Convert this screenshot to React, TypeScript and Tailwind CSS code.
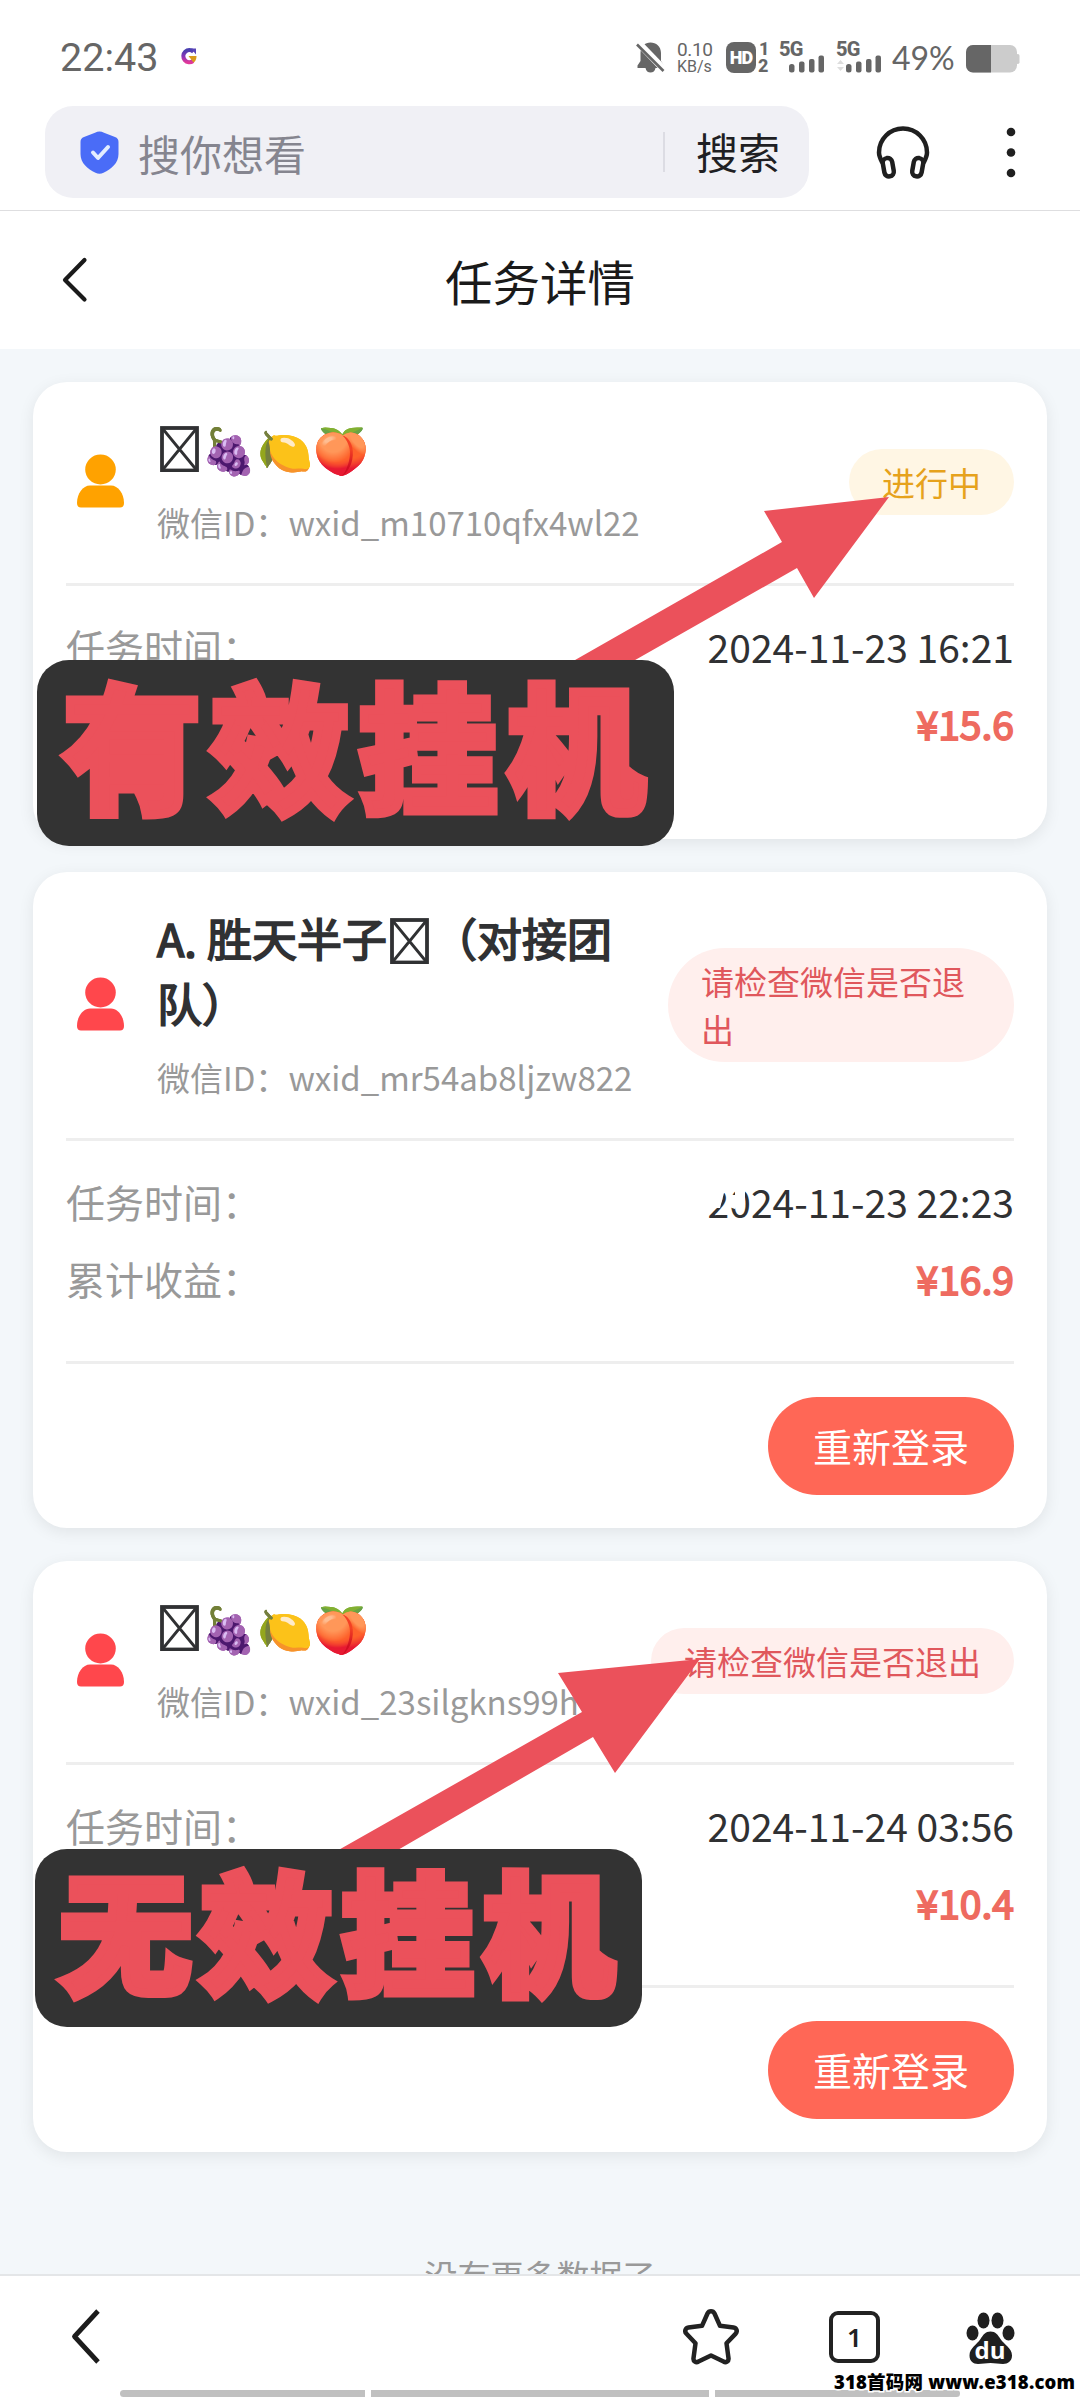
import clsx from 'clsx'

type Task = {
  name: 'fruit' | 'team'
  wxid: string
  status: string
  active: boolean
  time: string
  income: string
}

const tasks: Task[] = [
  {
    name: 'fruit',
    wxid: 'wxid_m10710qfx4wl22',
    status: '进行中',
    active: true,
    time: '2024-11-23 16:21',
    income: '¥15.6',
  },
  {
    name: 'team',
    wxid: 'wxid_mr54ab8ljzw822',
    status: '请检查微信是否退出',
    active: false,
    time: '2024-11-23 22:23',
    income: '¥16.9',
  },
  {
    name: 'fruit',
    wxid: 'wxid_23silgkns99h',
    status: '请检查微信是否退出',
    active: false,
    time: '2024-11-24 03:56',
    income: '¥10.4',
  },
]

function Signal({ arrows }: { arrows?: boolean }) {
  return (
    <div className="relative h-[31px] w-[46px]">
      <span className="absolute left-0 top-0 font-['Roboto'] text-[20px] font-extrabold leading-[15px] tracking-[-0.8px]">
        5G
      </span>
      <svg className="absolute inset-0" width="46" height="31" viewBox="0 0 46 31" fill="#666">
        <rect x="10" y="22" width="5.5" height="8.500" rx="2.500" />
        <rect x="20" y="19.500" width="5.5" height="11" rx="2" />
        <rect x="30" y="17" width="5.5" height="13.500" rx="2" />
        <rect x="39.500" y="13.500" width="5.5" height="17" rx="2" />
        {arrows && <path d="M1 22l3.500-4 3.500 4zM1 25l3.500 4 3.500-4z" fill="#ddd" />}
      </svg>
    </div>
  )
}

function StatusBar() {
  return (
    <div className="flex h-[106px] items-start pl-[60px] pt-[42px] text-[#666]">
      <span className="w-[120px] font-['Roboto'] text-[39.500px] leading-[32px]">22:43</span>
      <svg className="mt-[6px]" width="18" height="18" viewBox="0 0 18 18" fill="none">
        <defs>
          <linearGradient id="g" x1="0" y1="0" x2="0" y2="1">
            <stop offset="0" stopColor="#4a3fb0" />
            <stop offset="0.55" stopColor="#8a34b8" />
            <stop offset="1" stopColor="#e0389a" />
          </linearGradient>
        </defs>
        <path d="M13.500 3.800A6 6 0 1 0 13 13" stroke="url(#g)" strokeWidth="4.200" />
        <path d="M11 0.500h5v6z" fill="#5a45b8" />
        <path d="M8.500 8h8c0 3-1 5.500-3 6.500z" fill="#d99a1c" />
      </svg>

      <svg className="ml-[438px]" width="29" height="31" viewBox="0 0 29 31">
        <path
          d="M14.500 0.500C20 0.500 25 4.500 25 11v8l3 4.500v2.500h-8.500c-.5 3-2.500 4.500-5 4.500s-4.500-1.500-5-4.500H1.500v-2.500l3-4.500v-8c0-6.500 4.500-10.500 10-10.500z"
          fill="#666"
        />
        <path d="M1.500 0L28.500 28" stroke="#fff" strokeWidth="7" />
        <path d="M1 2.500L27.500 29" stroke="#666" strokeWidth="2.600" />
      </svg>
      <div className="ml-[12px] flex w-[49px] flex-col font-['Roboto']">
        <span className="text-[19px] leading-[15px] tracking-[-0.4px]">0.10</span>
        <span className="mt-[3px] text-[16px] leading-[13px]">KB/s</span>
      </div>
      <div className="flex h-[31px] w-[30px] items-center justify-center rounded-[8px] bg-[#666] font-['Roboto'] text-[18px] font-black tracking-[-1px] text-white">
        HD
      </div>
      <div className="ml-[2px] flex w-[21px] flex-col font-['Roboto'] text-[18px] font-extrabold leading-[14px]">
        <span className="pl-[1px]">1</span>
        <span className="mt-[3px]">2</span>
      </div>
      <Signal />
      <div className="w-[11px]" />
      <Signal arrows />
      <span className="ml-[10px] mt-px w-[74px] font-['Lato'] text-[32px] leading-[30px]">49%</span>
      <svg className="mt-[3px]" width="54" height="28" viewBox="0 0 54 28">
        <rect x="0" y="0" width="51" height="27.500" rx="7" fill="#ccc" />
        <rect x="50" y="9" width="3.500" height="10" rx="1.700" fill="#ccc" />
        <path d="M7 0h18v27.500H7a7 7 0 0 1-7-7V7a7 7 0 0 1 7-7z" fill="#666" />
      </svg>
    </div>
  )
}

function SearchBar() {
  return (
    <div className="flex h-[105px] items-start border-b border-[#dedee0] pl-[45px]">
      <div className="flex h-[92px] w-[764px] items-center rounded-[28px] bg-[#f0f0f5] pl-[35px]">
        <svg className="mt-px" width="39" height="43" viewBox="0 0 39 43">
          <path
            d="M19.500 0.500c1.500 0 3 .5 4.500 1.200l11 4.300c2.500 1 3.500 2.500 3.500 5V23c0 9-7 15-15 18.800-2.500 1.200-5.500 1.200-8 0C7.500 38 .5 32 .5 23V11c0-2.500 1-4 3.500-5l11-4.300c1.500-.7 3-1.200 4.500-1.200z"
            fill="#4a6cf7"
          />
          <path
            d="M13 21.500l5 5.500 10-11"
            fill="none"
            stroke="#e3edff"
            strokeWidth="4"
            strokeLinecap="round"
            strokeLinejoin="round"
          />
        </svg>
        <span className="ml-[19px] mt-px text-[42px] leading-[60px] text-[#85858f]">
          搜你想看
        </span>
        <span className="ml-auto h-[40px] w-[2px] bg-[#dcdce3]" />
        <span className="-mt-[2px] ml-[31px] mr-[29px] text-[42px] leading-[60px] text-[#1f1f23]">
          搜索
        </span>
      </div>
      <svg className="ml-[67px] mt-[20px]" width="54" height="54" viewBox="0 0 54 54" fill="none">
        <g stroke="#1f1f1f" strokeWidth="4.500" strokeLinecap="round" strokeLinejoin="round">
          <path d="M6 36C3 30 3 28 3 26.500a24 24 0 0 1 48 0C51 28 51 30 48 36" />
          <rect x="7.500" y="32" width="9.500" height="18.500" rx="4.700" transform="rotate(-10 12 41)" />
          <rect x="37" y="32" width="9.500" height="18.500" rx="4.700" transform="rotate(10 42 41)" />
        </g>
      </svg>
      <svg className="ml-[76px] mt-[20px]" width="10" height="54" viewBox="0 0 10 54" fill="#1f1f1f">
        <circle cx="5" cy="6" r="4.300" />
        <circle cx="5" cy="26.500" r="4.300" />
        <circle cx="5" cy="47" r="4.300" />
      </svg>
    </div>
  )
}

function Person({ active }: { active: boolean }) {
  return (
    <svg
      className={clsx('-mt-[2px] mx-[10px] shrink-0', active ? 'fill-[#ffa200]' : 'fill-[#ff474c]')}
      width="49"
      height="54"
      viewBox="0 0 49 54"
    >
      <ellipse cx="24.500" cy="15.500" rx="15.300" ry="15" />
      <path d="M14 31.500h21c7 0 13 8 13 17.500 0 3-1.500 4.500-4 4.500H5c-2.500 0-4-1.500-4-4.500 0-9.500 6-17.500 13-17.500z" />
    </svg>
  )
}

function Tofu() {
  return (
    <svg
      className="inline-block align-[-7px]"
      width="45"
      height="46"
      viewBox="0 0 45 46"
      fill="none"
      stroke="#303133"
    >
      <rect x="5" y="2" width="35" height="42.500" strokeWidth="3.800" />
      <path d="M5.500 2.500l34 41.500M39.500 2.500L5.500 44" strokeWidth="2.800" />
    </svg>
  )
}

function TaskCard({ task }: { task: Task }) {
  return (
    <section className="rounded-[34px] bg-white px-[33px] pt-[33px] shadow-[0_4px_16px_rgba(0,0,0,0.08)]">
      <div className="flex items-center border-b-[3px] border-[#eeeeee] pb-[34px]">
        <Person active={task.active} />
        <div className="ml-[22px] w-[490px]">
          <h3 className="text-[45px] leading-[65px] text-[#303133] [-webkit-text-stroke:1.7px_#303133]">
            {task.name === 'team' ? (
              <>
                A. 胜天半子
                <Tofu />
                （对接团
                <br />
                队）
              </>
            ) : (
              <span className="flex h-[65px] items-center">
                <span className="flex pt-[3px]">
                  <Tofu />
                </span>
                <span className="-ml-px">🍇🍋🍑</span>
              </span>
            )}
          </h3>
          <p className="mt-[18px] whitespace-nowrap pb-[3px] text-[33px] leading-[48px] text-[#999]">
            微信ID：{task.wxid}
          </p>
        </div>
        <div className="flex flex-1 justify-end">
          <span
            className={clsx(
              'rounded-[57px] px-[33px] py-[9px] text-[33px] leading-[48px]',
              task.active ? 'bg-[#fff6e4] text-[#e6a21c]' : 'bg-[#ffefed] text-[#e0575c]',
              task.name === 'team' ? '-ml-[4px] w-[346px] shrink-0' : 'whitespace-nowrap',
            )}
          >
            {task.status}
          </span>
        </div>
      </div>
      <div className="flex flex-col gap-[20px] pb-[54px] pt-[32px] text-[39px] leading-[57px]">
        <div className="flex justify-between">
          <span className="text-[#999]">任务时间：</span>
          <span className="relative text-[#303133]">
            {task.time}
            {task.name === 'team' && (
              <svg className="absolute left-0 top-[8px]" width="42" height="30" viewBox="0 0 42 30" fill="#fff">
                <path d="M0 0h37v23l-8 1-2 4-6-2V14h6V9h-6V0v12h-5l-4 15H0zM11 3h10v9H11z" />
              </svg>
            )}
          </span>
        </div>
        <div className="flex justify-between">
          <span className="text-[#999]">累计收益：</span>
          <span className="text-[#ee6b60] [-webkit-text-stroke:1.8px_#ee6b60]">{task.income}</span>
        </div>
      </div>
      {task.active ? (
        <div className="h-[33px]" />
      ) : (
        <div className="flex justify-end border-t-[3px] border-[#eeeeee] py-[33px]">
          <button className="h-[98px] w-[246px] rounded-full bg-[#ff6756] pb-[2px] text-[39px] text-white">
            重新登录
          </button>
        </div>
      )}
    </section>
  )
}

function BottomBar() {
  return (
    <div className="flex h-[126px] shrink-0 flex-col border-t-2 border-[#e4e6e8] bg-white">
      <div className="flex h-[114px] items-start pl-[71px] pt-[33px]">
        <svg width="30" height="56" viewBox="0 0 30 56" fill="none" stroke="#1c1c1c" strokeWidth="4.800">
          <path d="M27 2L3.500 27.500 27 53" strokeLinejoin="round" />
        </svg>
        <svg className="ml-[582px]" width="56" height="56" viewBox="0 0 56 56" fill="none">
          <path
            d="M24.500 4.500c1.500-3 5.500-3 7 0l5.500 12.300 13.500 1.700c3.200.5 4.300 4 2 6.300l-9 9.400 2 15c.4 3.200-2.500 4.800-5 3.300L28 46.500 15.500 52.500c-2.500 1.500-5.400-.1-5-3.300l2-15-9-9.400c-2.300-2.300-1.200-5.800 2-6.300L19 16.800z"
            stroke="#222"
            strokeWidth="4.500"
            strokeLinejoin="round"
          />
        </svg>
        <div className="ml-[90px] mt-[2px] flex h-[52px] w-[51px] items-center justify-center rounded-[9px] border-[4px] border-[#222] font-['Noto_Sans'] text-[26px] font-semibold text-[#222]">
          1
        </div>
        <svg className="ml-[86px] mt-[3px]" width="50" height="54" viewBox="0 0 50 54">
          <g fill="#1f1f1f">
            <ellipse cx="17.500" cy="8.500" rx="6" ry="8" />
            <ellipse cx="31.500" cy="8.500" rx="6" ry="8" />
            <ellipse cx="6.500" cy="21" rx="6" ry="7.600" />
            <ellipse cx="42.500" cy="21" rx="6" ry="7.600" />
            <path d="M24.500 19.500c5 0 7.500 3.500 10 7.500 3.500 5.500 11.500 9 11.500 16.500 0 5.500-4 8.500-9 8.500-4.500 0-8-1-12.500-1s-8 1-12.500 1c-5 0-8.500-3-8.500-8.500C3.500 36 11 32.500 14.500 27c2.500-4 5-7.500 10-7.500z" />
          </g>
          <text x="24" y="47" textAnchor="middle" fill="#fff" className="font-['Open_Sans'] text-[24px] font-bold">
            du
          </text>
        </svg>
      </div>
      <div className="flex gap-[6px] pl-[120px]">
        <div className="h-[7px] w-[245px] rounded-l-full bg-[#c0c0c0]" />
        <div className="h-[7px] w-[338px] bg-[#c0c0c0]" />
        <div className="h-[7px] w-[245px] rounded-r-full bg-[#c0c0c0]" />
      </div>
    </div>
  )
}

export default function App() {
  return (
    <div className="relative flex h-[2400px] w-[1080px] flex-col overflow-hidden bg-white font-['Noto_Sans_CJK_SC',sans-serif]">
      <StatusBar />
      <SearchBar />
      <header className="flex h-[138px] items-center pl-[61px]">
        <svg width="28" height="46" viewBox="0 0 28 46" fill="none" stroke="#1a1a1a" strokeWidth="4.200">
          <path d="M23.500 3L4 23l19.500 19.500" strokeLinecap="round" strokeLinejoin="round" />
        </svg>
        <h1 className="mr-[89px] mt-[2px] flex-1 text-center text-[47.500px] leading-[70px] text-[#1a1a1a]">
          任务详情
        </h1>
      </header>

      <main className="min-h-0 flex-1 overflow-hidden bg-[#f3f7fa] px-[33px] pt-[33px]">
        <div className="flex flex-col gap-[33px]">
          {tasks.map((task) => (
            <TaskCard key={task.wxid} task={task} />
          ))}
        </div>
        <p className="mt-[99px] text-center text-[33px] leading-[48px] text-[#999]">没有更多数据了</p>
      </main>
      <BottomBar />

      {/* annotations */}
      <svg
        className="absolute left-0 top-0"
        width="1080"
        height="2400"
        viewBox="0 0 1080 2400"
        fill="#eb515b"
      >
        <path d="M889 497L814 598 797 568 600 680 540 680 782 542 764 511z" />
        <path d="M700 1659L615 1773 593 1737 365 1869 305 1869 582 1712 558 1673z" />
      </svg>
      <div className="absolute left-[37px] top-[660px] flex h-[186px] w-[637px] items-center justify-center rounded-[32px] bg-[#333]">
        <span className="-mr-[8px] -mt-[22px] whitespace-nowrap text-[137px] font-black leading-none tracking-[11px] text-[#eb515b] [-webkit-text-stroke:9px_#eb515b]">
          有效挂机
        </span>
      </div>
      <div className="absolute left-[35px] top-[1849px] flex h-[178px] w-[607px] items-center justify-center rounded-[32px] bg-[#333]">
        <span className="-mr-[7px] -mt-[22px] whitespace-nowrap text-[131px] font-black leading-none tracking-[10px] text-[#eb515b] [-webkit-text-stroke:9px_#eb515b]">
          无效挂机
        </span>
      </div>
      <span className="absolute left-[834px] top-[2369px] whitespace-nowrap font-['Noto_Sans','Noto_Sans_CJK_SC'] text-[18.500px] font-black leading-[26px] tracking-[0.2px] text-black [paint-order:stroke_fill] [-webkit-text-stroke:3px_#fff]">
        318首码网 www.e318.com
      </span>
    </div>
  )
}
